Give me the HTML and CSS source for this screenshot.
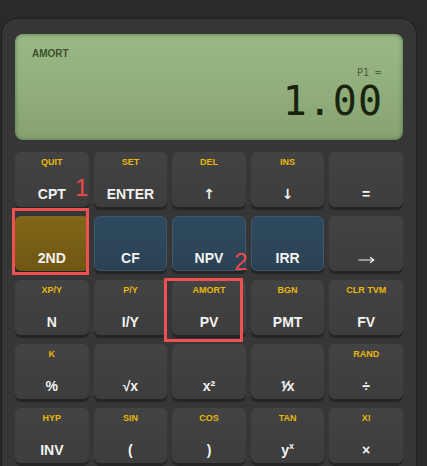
FILE: index.html
```html
<!DOCTYPE html>
<html>
<head>
<meta charset="utf-8">
<link rel="stylesheet" href="styles.css">
</head>
<body>
<div class="calc">
  <div class="display">
    <div class="mode">AMORT</div>
    <div class="reg">P1 =</div>
    <div class="value">1.00</div>
  </div>
  <div class="keypad">
    <div class="key"><span class="sec">QUIT</span><span class="main">CPT</span></div>
    <div class="key"><span class="sec">SET</span><span class="main">ENTER</span></div>
    <div class="key"><span class="sec">DEL</span><span class="main sym">&#8593;</span></div>
    <div class="key"><span class="sec">INS</span><span class="main sym">&#8595;</span></div>
    <div class="key"><span class="sec"></span><span class="main">=</span></div>

    <div class="key second"><span class="sec"></span><span class="main">2ND</span>
      <div class="mark mark-1"><span class="num">1</span></div>
    </div>
    <div class="key cash"><span class="sec"></span><span class="main">CF</span></div>
    <div class="key cash"><span class="sec"></span><span class="main">NPV</span></div>
    <div class="key cash"><span class="sec"></span><span class="main">IRR</span></div>
    <div class="key"><span class="sec"></span><span class="main arrow"><svg width="17" height="8" viewBox="0 0 17 8"><path d="M0.5 4H15.5M12 1.2L15.8 4L12 6.8" fill="none" stroke="#f2f2f2" stroke-width="1.2"/></svg></span></div>

    <div class="key"><span class="sec">XP/Y</span><span class="main">N</span></div>
    <div class="key"><span class="sec">P/Y</span><span class="main">I/Y</span></div>
    <div class="key"><span class="sec">AMORT</span><span class="main">PV</span>
      <div class="mark mark-2"><span class="num">2</span></div>
    </div>
    <div class="key"><span class="sec">BGN</span><span class="main">PMT</span></div>
    <div class="key"><span class="sec">CLR TVM</span><span class="main">FV</span></div>

    <div class="key"><span class="sec">K</span><span class="main">%</span></div>
    <div class="key"><span class="sec"></span><span class="main">&#8730;x</span></div>
    <div class="key"><span class="sec"></span><span class="main">x&#178;</span></div>
    <div class="key"><span class="sec"></span><span class="main">&#8543;x</span></div>
    <div class="key"><span class="sec">RAND</span><span class="main">&#247;</span></div>

    <div class="key"><span class="sec">HYP</span><span class="main">INV</span></div>
    <div class="key"><span class="sec">SIN</span><span class="main">(</span></div>
    <div class="key"><span class="sec">COS</span><span class="main">)</span></div>
    <div class="key"><span class="sec">TAN</span><span class="main">y<sup>x</sup></span></div>
    <div class="key"><span class="sec">X!</span><span class="main">&#215;</span></div>
  </div>
</div>
</body>
</html>
```
FILE: styles.css
```css
html, body {
  margin: 0;
  padding: 0;
  background: #2a2a2a;
  height: 466px;
  overflow: hidden;
}

.calc {
  margin: 18px 0 0 1px;
  width: 388px;
  padding: 15px 13px 0 13px;
  background: #363636;
  border: 1px solid #1f1f1f;
  border-bottom: none;
  border-radius: 16px 16px 0 0;
  height: 500px;
  font-family: "Liberation Sans", Arial, sans-serif;
}

.display {
  height: 106px;
  box-sizing: border-box;
  border-radius: 8px;
  background: linear-gradient(180deg, #9bb986 0%, #90ad7b 55%, #86a271 100%);
  box-shadow: inset 0 0 4px rgba(40, 60, 30, 0.55);
  padding: 14px 20px 0 17px;
  display: flex;
  flex-direction: column;
}

.mode {
  font-size: 10px;
  font-weight: bold;
  color: #3e5030;
  line-height: 12px;
}

.reg {
  align-self: flex-end;
  font-family: "DejaVu Sans Mono", monospace;
  font-size: 10px;
  color: #4b5d3c;
  line-height: 12px;
  margin-top: 7px;
  margin-right: 2px;
}

.value {
  align-self: flex-end;
  font-family: "DejaVu Sans Mono", monospace;
  font-size: 40px;
  line-height: 40px;
  letter-spacing: 1px;
  color: #18240f;
  margin-top: 2px;
}

.keypad {
  margin-top: 12px;
  display: grid;
  grid-template-columns: repeat(5, 1fr);
  column-gap: 5px;
  row-gap: 9px;
}

.key {
  position: relative;
  height: 55px;
  box-sizing: border-box;
  border-radius: 6px;
  background: linear-gradient(180deg, #434343 0%, #3d3d3d 100%);
  box-shadow: 0 3px 0 #242424;
  display: flex;
  flex-direction: column;
  align-items: center;
  justify-content: space-between;
  padding: 5px 0 5px;
}

.key.second {
  background: linear-gradient(180deg, #826619 0%, #6f5612 100%);
}

.key.cash {
  background: linear-gradient(180deg, #2f4a5f 0%, #2b4254 100%);
  border: 1px solid #3b5870;
  padding: 4px 0 4px;
}

.sec {
  font-size: 9px;
  font-weight: bold;
  color: #e9b80a;
  line-height: 10px;
  height: 10px;
}

.main {
  font-size: 14px;
  font-weight: bold;
  color: #f2f2f2;
  line-height: 16px;
}

.main.sym {
  font-family: "DejaVu Sans", sans-serif;
  font-size: 14px;
}

.main.arrow {
  display: flex;
  align-items: center;
  height: 16px;
  margin-bottom: -2px;
}

.main sup {
  font-size: 9px;
  line-height: 0;
  vertical-align: 6px;
}

.mark {
  position: absolute;
  box-sizing: border-box;
  border: 3px solid #ee5151;
}

.mark-1 {
  left: -3px;
  top: -8px;
  width: 77px;
  height: 67px;
}

.mark-2 {
  left: -8px;
  top: -2px;
  width: 79px;
  height: 64px;
}

.num {
  position: absolute;
  font-size: 24px;
  line-height: 24px;
  color: #ef4747;
  font-weight: normal;
}

.mark-1 .num {
  left: 60px;
  top: -35px;
}

.mark-2 .num {
  left: 67px;
  top: -31px;
}
```
